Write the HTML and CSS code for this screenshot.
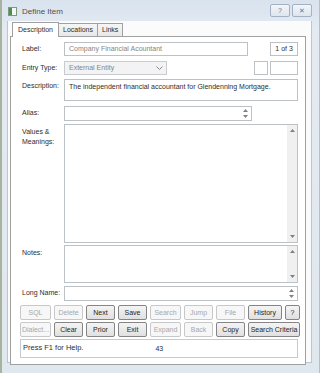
FILE: index.html
```html
<!DOCTYPE html>
<html>
<head>
<title>Define Item</title>
<link rel="stylesheet" href="styles.css">
</head>
<body>
  <div class="window">
    <div class="titlebar">
      <span class="app-icon"></span>
      <span class="title">Define Item</span>
      <div class="caption">
        <span class="cap">?</span>
        <span class="cap">&#x2715;</span>
      </div>
    </div>

    <div class="client">
      <div class="tabs">
        <span class="tab active">Description</span>
        <span class="tab">Locations</span>
        <span class="tab">Links</span>
      </div>

      <div class="panel">
        <div class="row r-label">
          <label>Label:</label>
          <div class="box label-box gray">Company Financial Acountant</div>
          <div class="box counter">1 of 3</div>
        </div>

        <div class="row r-entry">
          <label>Entry Type:</label>
          <div class="box select gray">External Entity
            <svg class="drop" width="7" height="4" viewBox="0 0 7 4"><path d="M0.5 0.5 L3.5 3.5 L6.5 0.5" fill="none" stroke="#8a8a8a" stroke-width="1"/></svg>
          </div>
          <div class="box small-a"></div>
          <div class="box small-b"></div>
        </div>

        <div class="row r-desc">
          <label>Description:</label>
          <div class="box full">The independent financial accountant for Glendenning Mortgage.</div>
        </div>

        <div class="row r-alias">
          <label>Alias:</label>
          <div class="box alias-box">
            <span class="spin">
              <svg width="5" height="3" viewBox="0 0 5 3"><path d="M0 3 L2.5 0 L5 3 Z" fill="#808080"/></svg>
              <svg width="5" height="3" viewBox="0 0 5 3"><path d="M0 0 L2.5 3 L5 0 Z" fill="#808080"/></svg>
            </span>
          </div>
        </div>

        <div class="row r-values">
          <label>Values &amp;<br>Meanings:</label>
          <div class="box full scroll-box">
            <span class="vscroll">
              <svg width="5" height="3" viewBox="0 0 5 3"><path d="M0 3 L2.5 0 L5 3 Z" fill="#808080"/></svg>
              <svg width="5" height="3" viewBox="0 0 5 3"><path d="M0 0 L2.5 3 L5 0 Z" fill="#808080"/></svg>
            </span>
          </div>
        </div>

        <div class="row r-notes">
          <label>Notes:</label>
          <div class="box full scroll-box">
            <span class="vscroll">
              <svg width="5" height="3" viewBox="0 0 5 3"><path d="M0 3 L2.5 0 L5 3 Z" fill="#808080"/></svg>
              <svg width="5" height="3" viewBox="0 0 5 3"><path d="M0 0 L2.5 3 L5 0 Z" fill="#808080"/></svg>
            </span>
          </div>
        </div>

        <div class="row r-long">
          <label>Long Name:</label>
          <div class="box full spin-box">
            <span class="spin">
              <svg width="5" height="3" viewBox="0 0 5 3"><path d="M0 3 L2.5 0 L5 3 Z" fill="#808080"/></svg>
              <svg width="5" height="3" viewBox="0 0 5 3"><path d="M0 0 L2.5 3 L5 0 Z" fill="#808080"/></svg>
            </span>
          </div>
        </div>

        <div class="buttons">
          <span class="btn off">SQL</span>
          <span class="btn off">Delete</span>
          <span class="btn">Next</span>
          <span class="btn">Save</span>
          <span class="btn off">Search</span>
          <span class="btn off">Jump</span>
          <span class="btn off">File</span>
          <div class="pair">
            <span class="btn history">History</span>
            <span class="btn q">?</span>
          </div>

          <span class="btn off">Dialect...</span>
          <span class="btn">Clear</span>
          <span class="btn">Prior</span>
          <span class="btn">Exit</span>
          <span class="btn off">Expand</span>
          <span class="btn off">Back</span>
          <span class="btn">Copy</span>
          <span class="btn">Search Criteria</span>
        </div>

        <div class="status">
          <span class="help">Press F1 for Help.</span>
          <span class="num">43</span>
        </div>
      </div>
    </div>
  </div>
</body>
</html>
```

FILE: styles.css
```css
body {
  margin: 0;
  font-family: "Liberation Sans", Arial, sans-serif;
  font-size: 7px;
  color: #2e2e2e;
  background: #a7b39e;
}
.window {
  width: 318px;
  height: 373px;
  margin-left: 2px;
  box-sizing: border-box;
  background: linear-gradient(#d9e3ee, #e3eaf2 30px, #dfe7ef);
  padding: 0 7px 0 5px;
  border-right: 1px solid #b3c0cf;
}
.titlebar {
  height: 21px;
  display: flex;
  align-items: center;
}
.app-icon {
  width: 7px;
  height: 7px;
  margin-left: 1px;
  margin-top: 1px;
  border: 1px solid #7f9a7a;
  background: linear-gradient(90deg, #4a8f55 3px, #f4f8f2 3px);
}
.title {
  margin-left: 5px;
  font-size: 8px;
  color: #505050;
  margin-top: 1px;
}
.caption {
  margin-left: auto;
  display: flex;
  gap: 2px;
  margin-top: -1px;
}
.cap {
  width: 18px;
  height: 11px;
  border: 1px solid #a2b1c3;
  border-radius: 2px;
  background: linear-gradient(#f3f6fa, #dde5ee);
  font-size: 7px;
  line-height: 11px;
  text-align: center;
  color: #6a7688;
}

.client {
  background: #fbfbfb;
  height: 341px;
  padding: 0 5px 0 2px;
  border: 1px solid #bcc6d1;
  border-top: none;
}
.tabs {
  display: flex;
  height: 15px;
  align-items: flex-end;
  padding-left: 2px;
}
.tab {
  height: 12px;
  line-height: 12px;
  padding: 0 4px;
  border: 1px solid #a0a0a0;
  border-bottom: none;
  border-left: none;
  background: linear-gradient(#f6f6f6, #e8e8e8);
}
.tab.active {
  height: 14px;
  line-height: 13px;
  border-left: 1px solid #a0a0a0;
  background: #fff;
  position: relative;
  top: 1px;
  padding: 0 5px;
}
.panel {
  background: #fff;
  border: 1px solid #a0a0a0;
  height: 322px;
  padding: 5px 7px 0 9px;
}

.row {
  display: flex;
  align-items: flex-start;
}
.row label {
  width: 42px;
  flex: none;
  padding-left: 2px;
  padding-top: 2px;
  line-height: 10px;
}
.box {
  box-sizing: border-box;
  border: 1px solid #bcc1c6;
  background: #fff;
  height: 100%;
  padding: 0 4px;
  line-height: 12px;
  position: relative;
}
.gray {
  color: #858585;
}
.full {
  flex: 1;
}
.r-label { height: 14px; }
.r-entry { height: 14px; margin-top: 5px; }
.r-desc { height: 22px; margin-top: 4px; }
.r-alias { height: 15px; margin-top: 5px; }
.r-values { height: 119px; margin-top: 3px; }
.r-notes { height: 38px; margin-top: 2px; }
.r-long { height: 15px; margin-top: 3px; }

.r-desc .box {
  padding-top: 1px;
}
.r-values label,
.r-notes label {
  padding-top: 3px;
}
.label-box {
  width: 186px;
}
.counter {
  margin-left: 22px;
  width: 28px;
  padding: 0;
  text-align: center;
}
.select {
  width: 105px;
  background: #f3f3f3;
  border-color: #c8cbcf;
}
.drop {
  position: absolute;
  right: 3px;
  top: 4px;
}
.small-a {
  margin-left: 87px;
  width: 14px;
}
.small-b {
  margin-left: 2px;
  width: 28px;
}
.alias-box {
  width: 188px;
}
.spin {
  position: absolute;
  right: 3px;
  top: 2px;
  display: flex;
  flex-direction: column;
  gap: 3px;
}
.spin svg {
  display: block;
}
.vscroll {
  position: absolute;
  right: 0;
  top: 0;
  bottom: 0;
  width: 10px;
  background: #f0f0f0;
  display: flex;
  flex-direction: column;
  justify-content: space-between;
  align-items: center;
  padding: 4px 0;
  box-sizing: border-box;
}
.vscroll svg {
  display: block;
}

.buttons {
  margin-top: 4px;
  display: grid;
  grid-template-columns: 31px 29px 29px 29px 31px 29px 29px 52px;
  grid-auto-rows: 15px;
  column-gap: 3px;
  row-gap: 2px;
}
.pair {
  display: flex;
  gap: 3px;
}
.btn {
  box-sizing: border-box;
  border: 1px solid #858585;
  border-radius: 2px;
  background: linear-gradient(#f4f4f4, #e0e0e0);
  text-align: center;
  line-height: 13px;
  color: #1e1e1e;
  white-space: nowrap;
  overflow: hidden;
}
.btn.off {
  border-color: #c6c8ca;
  background: #f7f7f7;
  color: #a8a8a8;
}
.history {
  width: 34px;
}
.q {
  width: 15px;
}
.status {
  margin-top: 2px;
  height: 19px;
  border: 1px solid #c8cbce;
  box-sizing: border-box;
  display: flex;
  padding: 3px 2px 0;
  font-size: 7.5px;
}
.num {
  margin-left: 72px;
  margin-top: 2px;
  font-size: 7px;
}
```
